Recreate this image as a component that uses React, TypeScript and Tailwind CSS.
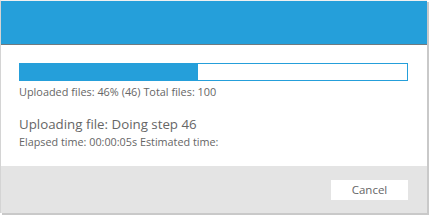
export default function App() {
  const percent = 46;
  return (
    <div className="w-[429px] h-[216px] bg-white" style={{ fontFamily: '"Open Sans", "Noto Sans", sans-serif' }}>
      <div className="w-[427px] h-[213px] flex flex-col border-l border-t border-l-[#d4d4d4] border-t-[#f0f0f0] shadow-[2px_2px_0_#c9c9c9]">
        {/* Header */}
        <div className="h-[44px] bg-[#259fda] border-b border-[#6f7a80]" />

        {/* Body */}
        <div className="flex-1 bg-white pl-[18px] pr-[19px] pt-[18px]">
          <div className="h-[18px] border border-[#259fda] bg-white">
            <div className="h-full bg-[#259fda]" style={{ width: `${percent}%` }} />
          </div>
          <div className="mt-[4px] text-[10.9px] leading-[14px] text-[#666]">
            Uploaded files: 46% (46) Total files: 100
          </div>
          <div className="mt-[16px] text-[13.3px] leading-[18px] text-[#666]">
            Uploading file: Doing step 46
          </div>
          <div className="mt-[2px] text-[10.8px] leading-[14px] text-[#666]">
            Elapsed time: 00:00:05s Estimated time:
          </div>
        </div>

        {/* Footer */}
        <div className="h-[47px] bg-[#e4e4e4] flex items-start justify-end pr-[19px] pt-[14px]">
          <button className="w-[77px] h-[20px] bg-white text-[11.5px] text-[#666] leading-none">
            Cancel
          </button>
        </div>
      </div>
    </div>
  );
}
